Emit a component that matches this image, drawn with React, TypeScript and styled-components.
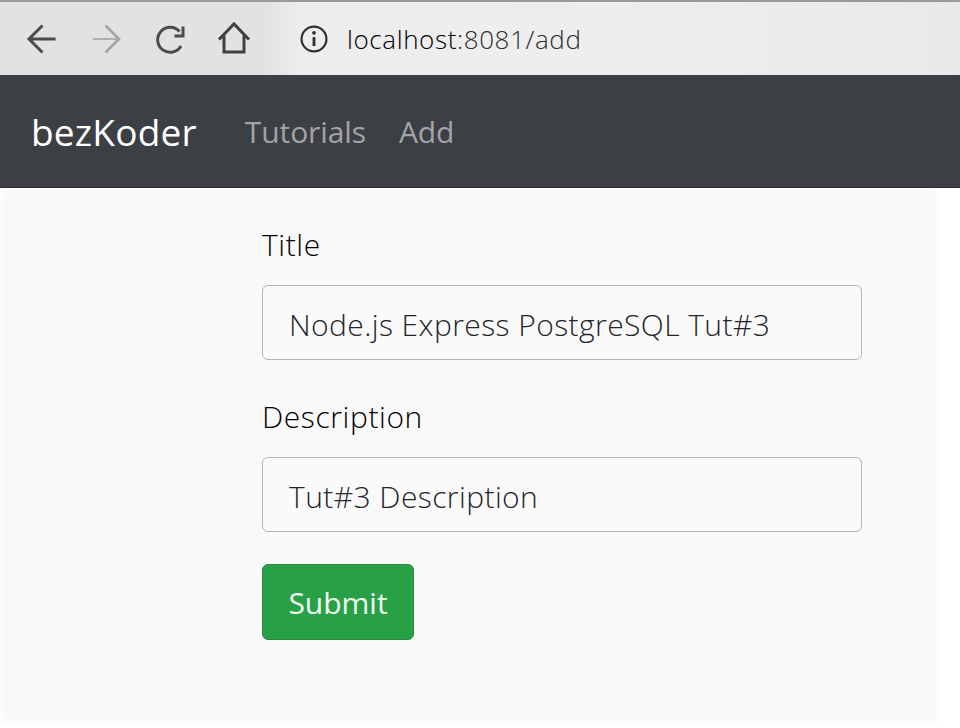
import * as React from 'react'
import styled, { createGlobalStyle } from 'styled-components'

const GlobalStyle = createGlobalStyle`
  html, body {
    margin: 0;
    padding: 0;
    background: #ffffff;
    font-family: 'Open Sans', 'Noto Sans', sans-serif;
  }
`
const Page = styled.div`
  width: 960px;
  height: 728px;
  overflow: hidden;
  display: flex;
  flex-direction: column;
`
const BrowserBar = styled.div`
  height: 73px;
  border-top: 2px solid #9a9a9a;
  background: linear-gradient(90deg, #e3e2e3 265px, #ededed 300px, #eeeeee 620px, #e9e9e9 100%);
  display: flex;
  align-items: center;
  flex-shrink: 0;
`
const NavIcons = styled.div`
  width: 278px;
  height: 100%;
  flex-shrink: 0;
  display: flex;
  align-items: center;
  padding-left: 24px;
  box-sizing: border-box;
  gap: 28px;
`
const IconButton = styled.svg`
  width: 36px;
  height: 36px;
  flex-shrink: 0;
  fill: none;
`
const InfoIcon = styled.svg`
  width: 28px;
  height: 28px;
  flex-shrink: 0;
  fill: none;
`
const AddressBar = styled.div`
  flex: 1;
  height: 100%;
  display: flex;
  align-items: center;
  padding-left: 22px;
  gap: 19px;
`
const Url = styled.span`
  font-size: 26px;
  font-weight: 300;
  letter-spacing: 0.6px;
  color: #000000;
`
const UrlMuted = styled.span`
  color: #2a2d31;
`
const Navbar = styled.nav`
  height: 112px;
  background: #3c3f44;
  border-bottom: 1px solid #2c2d30;
  display: flex;
  align-items: center;
  padding-left: 31px;
  flex-shrink: 0;
`
const Brand = styled.a`
  font-size: 37px;
  letter-spacing: 0.2px;
  color: #ffffff;
  margin-right: 48px;
`
const NavLink = styled.a`
  font-size: 30px;
  letter-spacing: -0.1px;
  color: #a2a4a6;
  margin-right: 33px;
`
const Content = styled.main`
  width: 940px;
  height: 535px;
  background: #f9f9f9;
  box-shadow: inset 0 0 8px #ffffff;
  padding: 36px 0 0 262px;
  box-sizing: border-box;
`
const Form = styled.form`
  width: 600px;
  display: flex;
  flex-direction: column;
`
const Field = styled.div`
  display: flex;
  flex-direction: column;
  margin-bottom: 36px;

  &:last-of-type {
    margin-bottom: 32px;
  }
`
const Label = styled.label`
  font-size: 30px;
  font-weight: 300;
  letter-spacing: 0.6px;
  line-height: 42px;
  color: #000000;
  margin-bottom: 19px;
`
const TextInput = styled.input`
  height: 75px;
  box-sizing: border-box;
  border: 1px solid #b5b5b5;
  border-radius: 6px;
  background: #fafafa;
  padding: 3px 26px 0;
  font-family: inherit;
  font-size: 30px;
  font-weight: 300;
  letter-spacing: 0.42px;
  color: #22252b;
  outline: none;
`
const SubmitButton = styled.button`
  width: 152px;
  height: 76px;
  box-sizing: border-box;
  border: 1px solid #26893f;
  border-radius: 6px;
  background: #28a045;
  color: #f4fff6;
  font-family: inherit;
  font-size: 30px;
  padding: 0;
`

const App = () => {
  return (
    <Page>
      <GlobalStyle />
      <BrowserBar>
        <NavIcons>
          <IconButton viewBox='0 0 36 36'>
            <path d='M31.6 18H5M18.5 4.5L5 18l13.5 13.5' stroke='#4a4b4d' strokeWidth='3' />
          </IconButton>
          <IconButton viewBox='0 0 36 36'>
            <path d='M4.7 18H29' stroke='#8c8c8d' strokeWidth='1.2' />
            <path d='M17.5 4.5L31 18 17.5 31.5' stroke='#a2a2a3' strokeWidth='2.6' />
          </IconButton>
          <IconButton viewBox='0 0 36 36'>
            <path d='M27.5 10.5a12.5 12.5 0 1 0 1.5 14.5' stroke='#4a4b4d' strokeWidth='3' />
            <path d='M31 5.5V15h-8.5' stroke='#4a4b4d' strokeWidth='3' />
          </IconButton>
          <IconButton viewBox='0 0 36 36'>
            <path d='M3 18.5L18 3l15 15.5M8 14.5V31h20V14.5' stroke='#3f4042' strokeWidth='3' />
          </IconButton>
        </NavIcons>
        <AddressBar>
          <InfoIcon viewBox='0 0 36 36'>
            <circle cx='18' cy='18' r='16' stroke='#2f3033' strokeWidth='2.8' />
            <path d='M18 15.5V27' stroke='#2f3033' strokeWidth='3.6' />
            <circle cx='18' cy='10' r='2.4' fill='#2f3033' />
          </InfoIcon>
          <Url>
            localhost<UrlMuted>:8081/add</UrlMuted>
          </Url>
        </AddressBar>
      </BrowserBar>
      <Navbar>
        <Brand>bezKoder</Brand>
        <NavLink>Tutorials</NavLink>
        <NavLink>Add</NavLink>
      </Navbar>
      <Content>
        <Form>
          <Field>
            <Label>Title</Label>
            <TextInput readOnly value='Node.js Express PostgreSQL Tut#3' />
          </Field>
          <Field>
            <Label>Description</Label>
            <TextInput readOnly value='Tut#3 Description' />
          </Field>
          <SubmitButton type='button'>Submit</SubmitButton>
        </Form>
      </Content>
    </Page>
  )
}

export default App
